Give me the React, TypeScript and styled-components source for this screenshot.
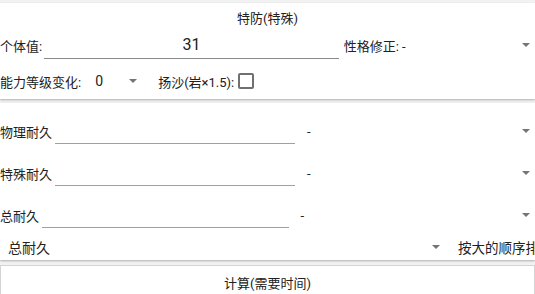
import { FC } from 'react';
import styled, { createGlobalStyle } from 'styled-components';

const GlobalStyle = createGlobalStyle`
body {
    margin: 0;
    overflow: hidden;
    background: #f2f2f2;
    font-family: Roboto, "Noto Sans CJK SC", sans-serif;
    color: #212121;
}
`

const Page = styled.div`
width: 535px;
padding-top: 3px;
`

const Card = styled.div<{ top?: number }>`
background: #ffffff;
margin-top: ${(p) => p.top || 0}px;
box-shadow: 0 1px 2px rgba(0, 0, 0, 0.28);
`

const Title = styled.div`
height: 28px;
display: flex;
align-items: center;
justify-content: center;
font-size: 13px;
`

const Row = styled.div<{ h: number; top?: number }>`
display: flex;
align-items: center;
height: ${(p) => p.h}px;
margin-top: ${(p) => p.top || 0}px;
white-space: nowrap;
`

const Label = styled.span<{ size?: number; gap?: number; left?: number }>`
font-size: ${(p) => p.size || 13}px;
margin-right: ${(p) => p.gap || 0}px;
margin-left: ${(p) => p.left || 0}px;
flex-shrink: 0;
`

const Field = styled.div<{ grow: number; h: number; line: string }>`
flex: ${(p) => p.grow} 1 0;
height: ${(p) => p.h}px;
box-sizing: border-box;
border-bottom: 1px solid ${(p) => p.line};
display: flex;
align-items: center;
justify-content: center;
font-size: 16px;
`

const Select = styled.div<{ grow?: number; w?: number }>`
${(p) => (p.w ? `width: ${p.w}px; flex-shrink: 0;` : `flex: ${p.grow || 1} 1 0;`)}
display: flex;
align-items: center;
justify-content: space-between;
`

const Value = styled.span<{ size?: number; pl: number }>`
font-size: ${(p) => p.size || 13}px;
margin-left: ${(p) => p.pl}px;
`

const Arrow = styled.span<{ pr: number }>`
width: 0;
height: 0;
margin-right: ${(p) => p.pr}px;
border-left: 4px solid transparent;
border-right: 4px solid transparent;
border-top: 4px solid #757575;
`

const CheckBox = styled.span`
width: 16px;
height: 16px;
box-sizing: border-box;
border: 2px solid #707070;
border-radius: 2px;
margin-left: 4px;
`

const SortLabel = styled.span`
flex: 1;
overflow: hidden;
margin-left: 10px;
font-size: 13.5px;
`

const Body = styled.div`
padding: 7px 0 2px;
`

const Button = styled.div`
margin-top: 5px;
height: 34px;
box-sizing: border-box;
background: #ffffff;
border: 1px solid #d4d4d4;
display: flex;
align-items: center;
justify-content: center;
font-size: 13px;
`

const StatRow: FC<{ label: string }> = ({ label }) => (
    <Row h={42}>
        <Label gap={3}>{label}</Label>
        <Field grow={1} h={26} line="#a0a0a0" />
        <Select grow={1}>
            <Value pl={12}>-</Value>
            <Arrow pr={5} />
        </Select>
    </Row>
)

const App: FC = () => {
    return (
        <>
            <GlobalStyle />
            <Page>
                <Card>
                    <Title>特防(特殊)</Title>
                    <Row h={28}>
                        <Label gap={2}>个体值:</Label>
                        <Field grow={3} h={27} line="#8a8a8a">31</Field>
                        <Select grow={2}>
                            <Value pl={5}>性格修正: -</Value>
                            <Arrow pr={5} />
                        </Select>
                    </Row>
                    <Row h={36} top={4}>
                        <Label gap={6}>能力等级变化:</Label>
                        <Select w={58}>
                            <Value size={14} pl={8}>0</Value>
                            <Arrow pr={8} />
                        </Select>
                        <Label left={13}>扬沙(岩×1.5):</Label>
                        <CheckBox />
                    </Row>
                </Card>
                <Card top={4}>
                    <Body>
                        <StatRow label="物理耐久" />
                        <StatRow label="特殊耐久" />
                        <StatRow label="总耐久" />
                        <Row h={22}>
                            <Select w={448}>
                                <Value size={14} pl={8}>总耐久</Value>
                                <Arrow pr={8} />
                            </Select>
                            <SortLabel>按大的顺序排列</SortLabel>
                        </Row>
                    </Body>
                </Card>
                <Button>计算(需要时间)</Button>
            </Page>
        </>
    )
}

export default App
